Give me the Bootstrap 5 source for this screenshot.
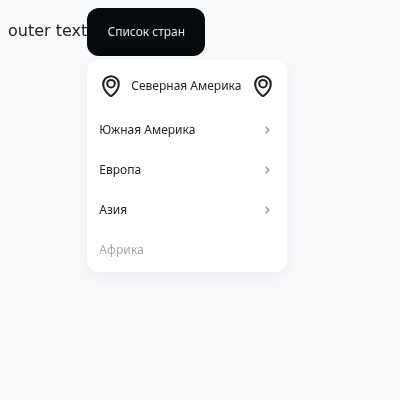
<!DOCTYPE html>
<html lang="ru">
<head>
<meta charset="utf-8">
<meta name="viewport" content="width=device-width, initial-scale=1">
<title>Список стран</title>
<link rel="stylesheet" href="https://cdn.jsdelivr.net/npm/bootstrap@5.3.0/dist/css/bootstrap.min.css">
<style>
body { background: #f8f9fb; color: #1c2023; font: 16px/24px "DejaVu Sans", sans-serif; }
.demo-row { will-change: transform; }
.outer-label { line-height: 46px; white-space: nowrap; color: #1c1f21; }
.country-btn, .country-btn:hover { width: 118px; height: 48px; padding: 0; border: 0; border-radius: 12px; font: 12px/16px "Noto Sans", sans-serif; background: #05090c; color: #e3e5e7; }
.country-menu { width: 200px; top: 52px; left: 0; padding: 2px 0; border: 0; border-radius: 12px; background: #fff; box-shadow: 0 4px 16px rgba(20, 30, 50, .05); }
.country-menu .dropdown-item { height: 40px; padding: 0 12px; color: #212529; font: 12px/16px "Noto Sans", sans-serif; }
.country-menu .with-pins { height: 48px; gap: 8px; }
.country-menu .dropdown-item.disabled { color: #a5a7a9; letter-spacing: .12px; }
</style>
<script src="https://cdn.jsdelivr.net/npm/bootstrap@5.3.0/dist/js/bootstrap.bundle.min.js"></script>
</head>
<body class="p-2 min-vh-100">
<svg class="d-none">
  <symbol id="pin" viewBox="0 0 24 24"><path d="M12 2.2C7.6 2.2 4.2 5.6 4.2 9.900c0 4.900 3.300 8.700 6.300 11.400q1.500 1.300 3 0c3-2.700 6.300-6.500 6.300-11.400 0-4.300-3.400-7.700-7.800-7.700z" fill="none" stroke="#1c2023" stroke-width="2"/><circle cx="12" cy="9.700" r="3.800" fill="none" stroke="#1c2023" stroke-width="2"/></symbol>
  <symbol id="chevron" viewBox="0 0 16 16"><path d="M6.500 4.700 9.800 8l-3.300 3.300" fill="none" stroke="#858789" stroke-width="1.200"/></symbol>
</svg>
<div class="demo-row d-flex align-items-start">
  <span class="outer-label">outer text</span>
  <div class="dropdown">
    <button class="btn country-btn" type="button">Список стран</button>
    <ul class="dropdown-menu show country-menu">
      <li><a class="dropdown-item with-pins d-flex align-items-center" href="#"><svg width="24" height="24"><use href="#pin"/></svg><span class="flex-grow-1">Северная Америка</span><svg width="24" height="24"><use href="#pin"/></svg></a></li>
      <li><a class="dropdown-item d-flex align-items-center justify-content-between" href="#">Южная Америка<svg width="16" height="16"><use href="#chevron"/></svg></a></li>
      <li><a class="dropdown-item d-flex align-items-center justify-content-between" href="#">Европа<svg width="16" height="16"><use href="#chevron"/></svg></a></li>
      <li><a class="dropdown-item d-flex align-items-center justify-content-between" href="#">Азия<svg width="16" height="16"><use href="#chevron"/></svg></a></li>
      <li><a class="dropdown-item disabled d-flex align-items-center" href="#">Африка</a></li>
    </ul>
  </div>
</div>
</body>
</html>
